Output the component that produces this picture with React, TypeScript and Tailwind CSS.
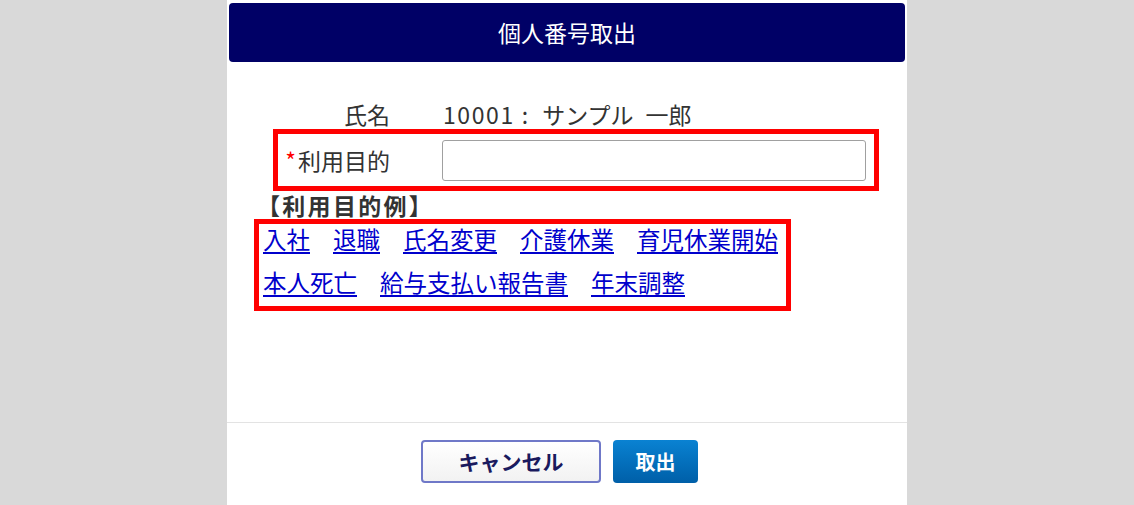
import React from 'react';

const purposes = [
  ['入社', '退職', '氏名変更', '介護休業', '育児休業開始'],
  ['本人死亡', '給与支払い報告書', '年末調整'],
];

const App: React.FC = () => {
  return (
    <div
      className="h-[505px] w-full bg-[#d9d9d9] overflow-hidden"
      style={{ fontFamily: '"Noto Sans CJK JP", "Noto Sans", sans-serif' }}
    >
      <div className="mx-auto w-[680px] h-full bg-white flex flex-col">
        {/* title bar */}
        <div className="mx-[2px] mt-[3px] h-[59px] rounded-[4px] bg-[#000066] flex items-center justify-center text-white text-[23px]">
          個人番号取出
        </div>

        <div className="flex-1 flex flex-col text-[#333333] text-[23px]">
          <div className="mt-[37px] ml-[51px] h-[30px] flex items-center">
            <div className="w-[112px] text-right">氏名</div>
            <div className="ml-[53px] flex items-center">
              <span className="tracking-[1.6px]">10001</span>
              <span className="ml-[7px] mr-[14px]">:</span>
              <span>サンプル</span>
              <span className="ml-[12px]">一郎</span>
            </div>
          </div>

          <div className="ml-[46px] w-[606px] h-[62px] border-[5px] border-[#ff0000] flex items-center">
            <div className="w-[112px] text-right">
              <span className="text-[#ff0000] mr-[2px]">*</span>利用目的
            </div>
            <input
              type="text"
              className="ml-[52px] w-[424px] h-[41px] rounded-[3px] border border-[#a0a0a0] outline-none px-2"
            />
          </div>

          <div className="ml-[30px] h-[28px] leading-[28px] font-bold tracking-[2.3px]">【利用目的例】</div>

          <div className="ml-[27px] w-[537px] h-[92px] border-[5px] border-[#ff0000] pl-[4px]">
            <div className="-mt-[6px] leading-[43px] text-[23.5px]">
              {purposes.map((row, i) => (
                <div key={i} className="flex gap-[23px]">
                  {row.map((p) => (
                    <a key={p} href="#" className="text-[#0000cc] underline underline-offset-[3px]">
                      {p}
                    </a>
                  ))}
                </div>
              ))}
            </div>
          </div>
        </div>

        {/* footer buttons */}
        <div className="h-[83px] border-t border-[#e3e3e3] flex items-start pt-[17px] pl-[194px] gap-[12px]">
          <button className="w-[180px] h-[43px] rounded-[4px] border-2 border-[#6f78c8] bg-gradient-to-b from-white to-[#f2f2f2] text-[#1a1a5e] text-[21px] font-bold">
            キャンセル
          </button>
          <button className="w-[85px] h-[43px] rounded-[4px] bg-gradient-to-b from-[#0a82d2] to-[#005fa8] text-white text-[20px] font-bold">
            取出
          </button>
        </div>
      </div>
    </div>
  );
};

export default App;
